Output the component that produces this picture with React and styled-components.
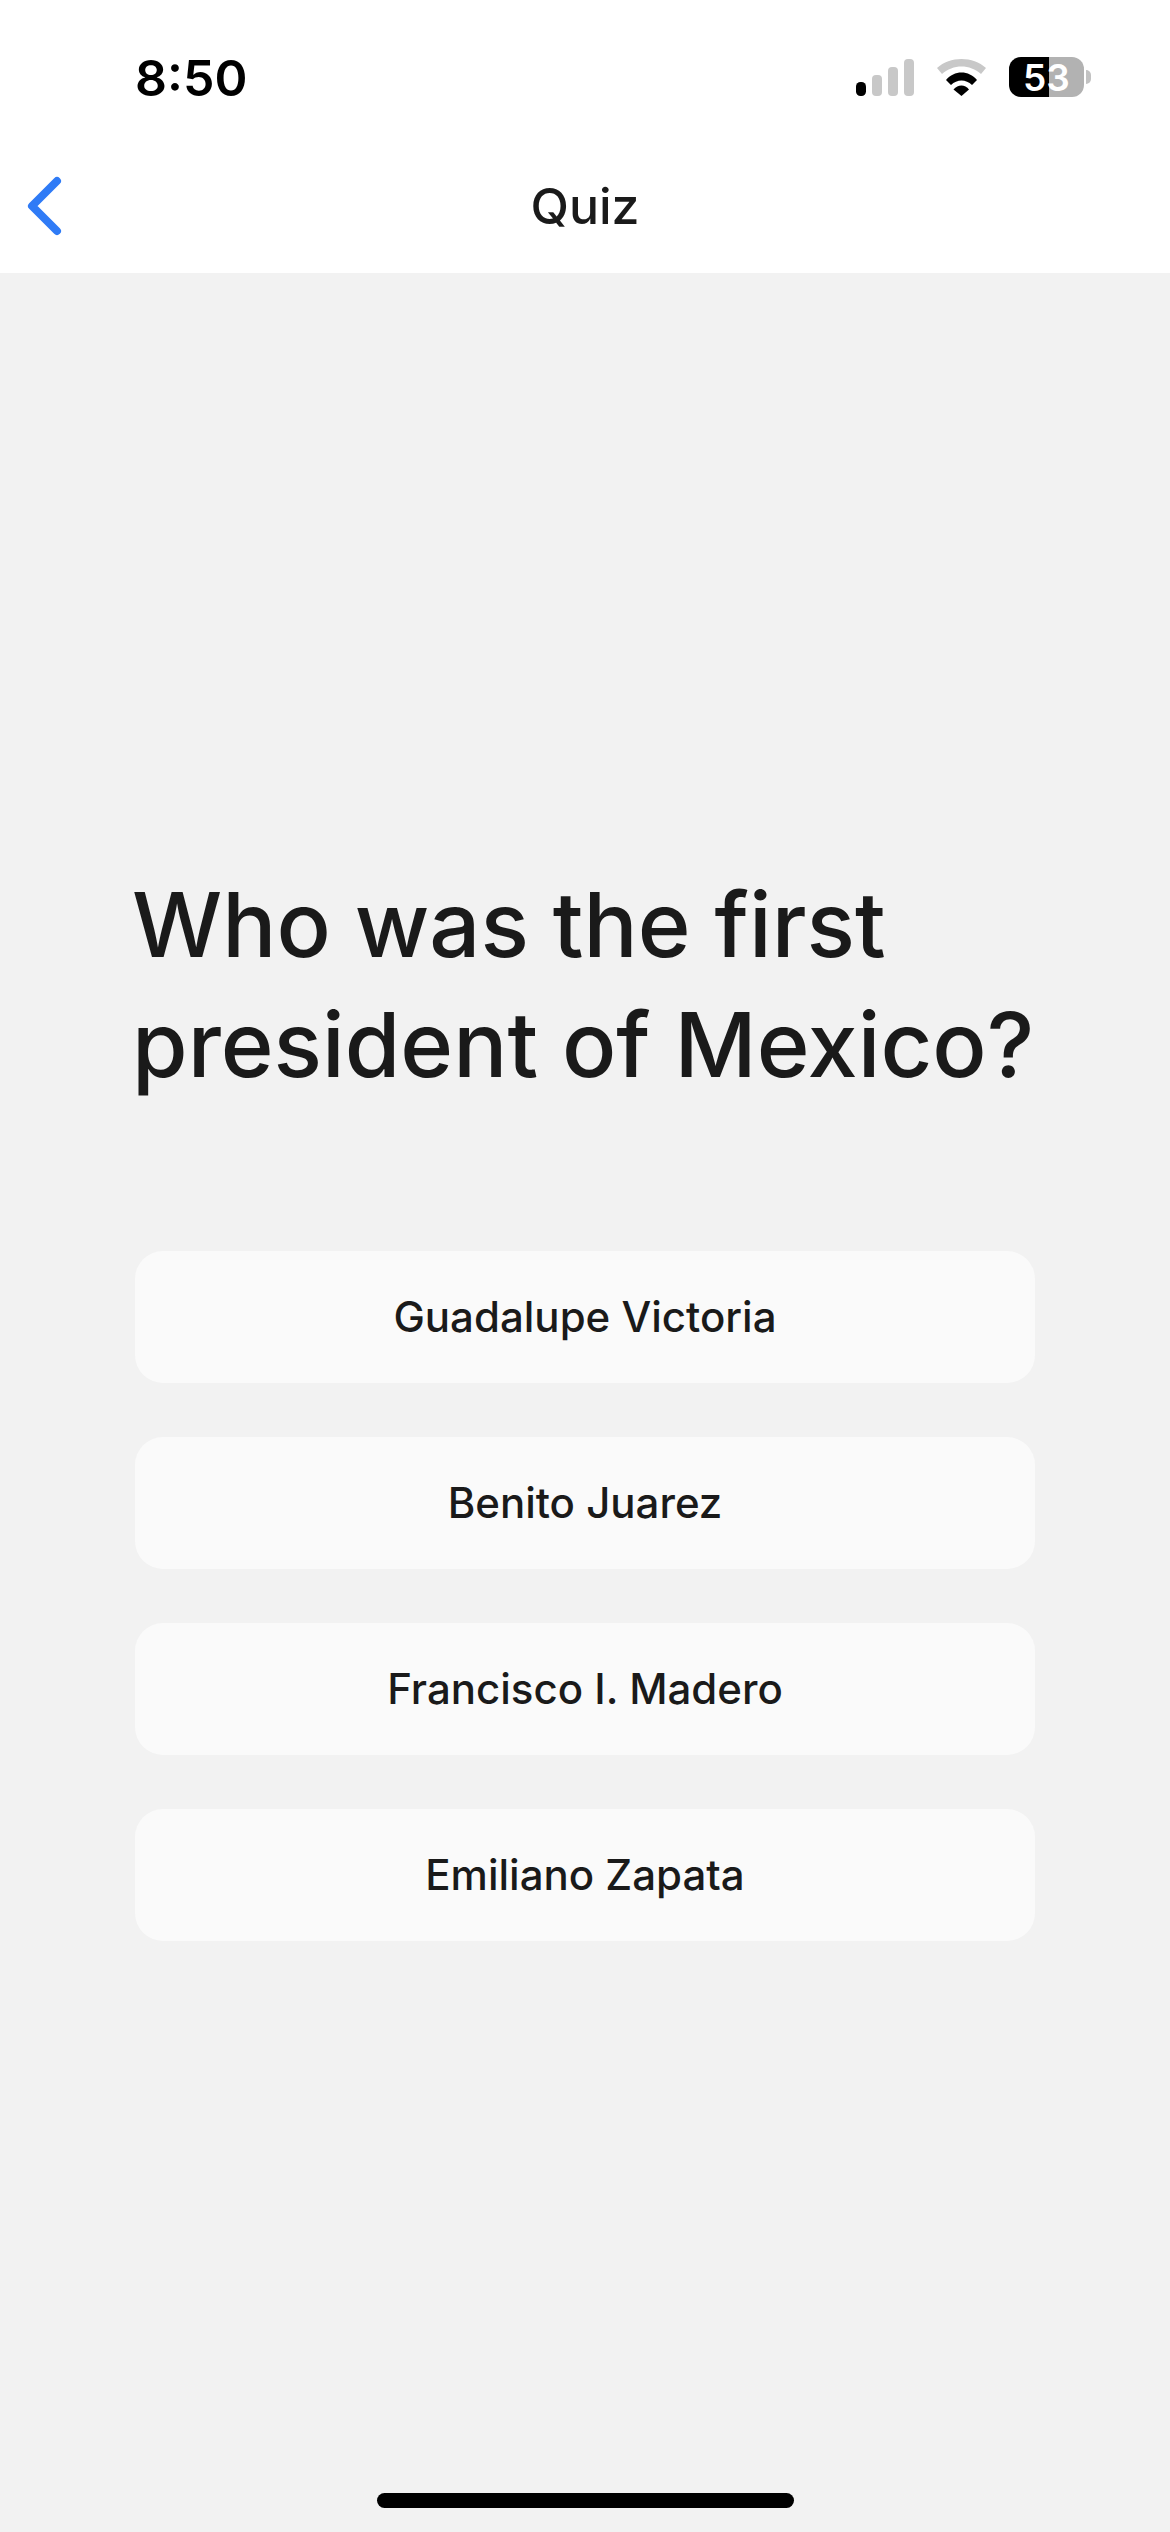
import React from "react";
import styled, { createGlobalStyle } from "styled-components";

const Global = createGlobalStyle`
  html, body { margin: 0; padding: 0; background: #f2f2f2; }
  * { box-sizing: border-box; }
`;

const Page = styled.div`
  width: 1170px;
  height: 2532px;
  display: flex;
  flex-direction: column;
  font-family: Inter, "Liberation Sans", sans-serif;
  background: #f2f2f2;
  color: #1a1a1a;
  overflow: hidden;
`;

const Header = styled.header`
  height: 273px;
  flex: none;
  background: #ffffff;
  display: flex;
  flex-direction: column;
`;

const StatusBar = styled.div`
  height: 128px;
  display: flex;
  align-items: flex-start;
  justify-content: space-between;
  padding: 48px 86px 0 135px;
`;

const Time = styled.div`
  font-size: 50px;
  line-height: 60px;
  font-weight: 600;
  color: #000;
`;

const StatusIcons = styled.div`
  display: flex;
  align-items: flex-start;
  padding-top: 9px;
`;

const Signal = styled.svg`
  width: 58px;
  height: 37px;
  margin-top: 2px;
  margin-right: 22px;
`;

const Wifi = styled.svg`
  width: 51px;
  height: 37px;
  margin-top: 2px;
  margin-right: 22px;
`;

const Battery = styled.div`
  width: 75px;
  height: 40px;
  border-radius: 12px;
  display: flex;
  align-items: center;
  justify-content: center;
  position: relative;
  color: #fff;
  font-size: 37px;
  font-weight: 600;
  background: linear-gradient(to right, #000 ${(p) => p.$level}%, #b2b2b2 ${(p) => p.$level}%);
  &::after {
    content: "";
    position: absolute;
    right: -7px;
    top: 13px;
    width: 5px;
    height: 14px;
    border-radius: 0 7px 7px 0;
    background: #c2c2c2;
  }
`;

const NavBar = styled.nav`
  flex: 1;
  display: grid;
  grid-template-columns: 1fr auto 1fr;
  align-items: center;
  padding: 11px 26px 0;
`;

const Back = styled.svg`
  width: 38px;
  height: 62px;
`;

const Title = styled.h1`
  margin: 0;
  font-size: 50px;
  line-height: 60px;
  font-weight: 500;
  color: #1a1a1a;
`;

const Main = styled.main`
  flex: 1;
  padding: 592px 135px 0;
  display: flex;
  flex-direction: column;
`;

const Question = styled.h2`
  margin: 0 0 146px -3px;
  font-size: 90px;
  line-height: 120px;
  font-weight: 500;
  white-space: nowrap;
  color: #1a1a1a;
`;

const Answers = styled.div`
  display: flex;
  flex-direction: column;
  gap: 54px;
`;

const Answer = styled.button`
  height: 132px;
  border: 0;
  border-radius: 28px;
  background: #fafafa;
  font-family: inherit;
  font-size: 42px;
  font-weight: 500;
  color: #1a1a1a;
  padding: 0 0 2px;
`;

const HomeBar = styled.div`
  flex: none;
  align-self: center;
  width: 417px;
  height: 15px;
  border-radius: 8px;
  background: #000;
  margin-bottom: 24px;
`;

const answers = ["Guadalupe Victoria", "Benito Juarez", "Francisco I. Madero", "Emiliano Zapata"];

export default function App() {
  return (
    <Page>
      <Global />
      <Header>
        <StatusBar>
          <Time>8:50</Time>
          <StatusIcons>
            <Signal viewBox="0 0 58 37">
              <rect x="0" y="23" width="10" height="14" rx="4.5" fill="#000" />
              <rect x="16" y="16" width="10" height="21" rx="4" fill="#c8c8c8" />
              <rect x="32" y="8" width="10" height="29" rx="4" fill="#c8c8c8" />
              <rect x="48" y="0" width="10" height="37" rx="4" fill="#c8c8c8" />
            </Signal>
            <Wifi viewBox="0 0 51 37">
              <path d="M1 9C14-3 37-3 50 9L45 15C34 5 17 5 6 15Z" fill="#c8c8c8" />
              <path d="M10 21C18 11 33 11 41 21L36 26C30 20 21 20 15 26Z" fill="#000" />
              <path d="M17.5 30.5C22 25 29 25 33 30.5L25.5 37Z" fill="#000" />
            </Wifi>
            <Battery $level={53}>53</Battery>
          </StatusIcons>
        </StatusBar>
        <NavBar>
          <Back viewBox="0 0 38 62" fill="none">
            <path d="M31 6 6 31 31 56" stroke="#2f7bf6" strokeWidth="8" strokeLinecap="round" strokeLinejoin="round" />
          </Back>
          <Title>Quiz</Title>
        </NavBar>
      </Header>
      <Main>
        <Question>
          Who was the first
          <br />
          president of Mexico?
        </Question>
        <Answers>
          {answers.map((a) => (
            <Answer key={a}>{a}</Answer>
          ))}
        </Answers>
      </Main>
      <HomeBar />
    </Page>
  );
}
